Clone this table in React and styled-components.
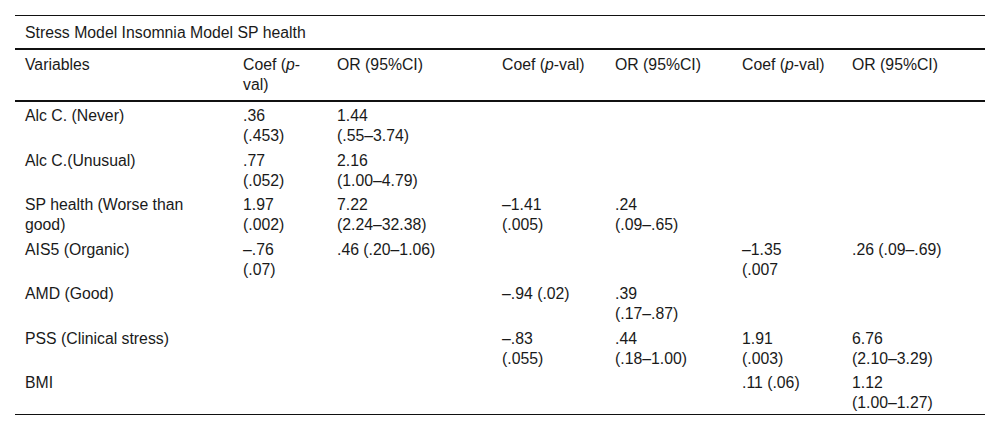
import React from 'react';
import styled, { createGlobalStyle } from 'styled-components';

const GlobalStyle = createGlobalStyle`
  html, body {
    margin: 0;
    padding: 0;
    background: #ffffff;
  }
  body {
    font-family: "Liberation Sans", Arial, Helvetica, sans-serif;
    color: #1a1a1a;
  }
`;

const COLUMNS = [218, 94, 165, 113, 127, 110, 143];

const Page = styled.div`
  padding: 15px 15px 0;
`;

const Table = styled.table`
  width: 970px;
  border-collapse: collapse;
  table-layout: fixed;
  font-size: 15.8px;
  line-height: 20px;
`;

const Col = styled.col`
  width: ${p => p.$w}px;
`;

const TitleCell = styled.th`
  text-align: left;
  font-weight: 400;
  padding: 7px 10px 5px;
  border-top: 1px solid #111;
  border-bottom: 2px solid #111;
`;

const HeadCell = styled.th`
  text-align: left;
  vertical-align: top;
  font-weight: 400;
  padding: 5px 10px 5px;
  border-bottom: 2px solid #111;
`;

const Row = styled.tr`
  border-bottom: ${p => (p.$last ? '1px solid #111' : 'none')};
`;

const Cell = styled.td`
  vertical-align: top;
  padding: 4px 10px 0.5px;
`;

const Line = styled.div`
  white-space: nowrap;
`;

const PVal = () => <>Coef (<i>p</i>-val)</>;

const HEADERS = [
  ['Variables'],
  [<>Coef (<i>p</i>-</>, 'val)'],
  ['OR (95%CI)'],
  [<PVal key="p" />],
  ['OR (95%CI)'],
  [<PVal key="p" />],
  ['OR (95%CI)'],
];

const ROWS = [
  [['Alc C. (Never)'], ['.36', '(.453)'], ['1.44', '(.55–3.74)'], [], [], [], []],
  [['Alc C.(Unusual)'], ['.77', '(.052)'], ['2.16', '(1.00–4.79)'], [], [], [], []],
  [['SP health (Worse than', 'good)'], ['1.97', '(.002)'], ['7.22', '(2.24–32.38)'], ['–1.41', '(.005)'], ['.24', '(.09–.65)'], [], []],
  [['AIS5 (Organic)'], ['–.76', '(.07)'], ['.46 (.20–1.06)'], [], [], ['–1.35', '(.007'], ['.26 (.09–.69)']],
  [['AMD (Good)'], [], [], ['–.94 (.02)'], ['.39', '(.17–.87)'], [], []],
  [['PSS (Clinical stress)'], [], [], ['–.83', '(.055)'], ['.44', '(.18–1.00)'], ['1.91', '(.003)'], ['6.76', '(2.10–3.29)']],
  [['BMI'], [], [], [], [], ['.11 (.06)'], ['1.12', '(1.00–1.27)']],
];

const Lines = ({ lines }) => lines.map((l, i) => <Line key={i}>{l}</Line>);

const App = () => {
  return (
    <Page>
      <GlobalStyle />
      <Table>
        <colgroup>
          {COLUMNS.map((w, i) => <Col key={i} $w={w} />)}
        </colgroup>
        <thead>
          <tr>
            <TitleCell colSpan={7}>Stress Model Insomnia Model SP health</TitleCell>
          </tr>
          <tr>
            {HEADERS.map((h, i) => (
              <HeadCell key={i}><Lines lines={h} /></HeadCell>
            ))}
          </tr>
        </thead>
        <tbody>
          {ROWS.map((row, r) => (
            <Row key={r} $last={r === ROWS.length - 1}>
              {row.map((cell, c) => (
                <Cell key={c}><Lines lines={cell} /></Cell>
              ))}
            </Row>
          ))}
        </tbody>
      </Table>
    </Page>
  );
};

export default App;
